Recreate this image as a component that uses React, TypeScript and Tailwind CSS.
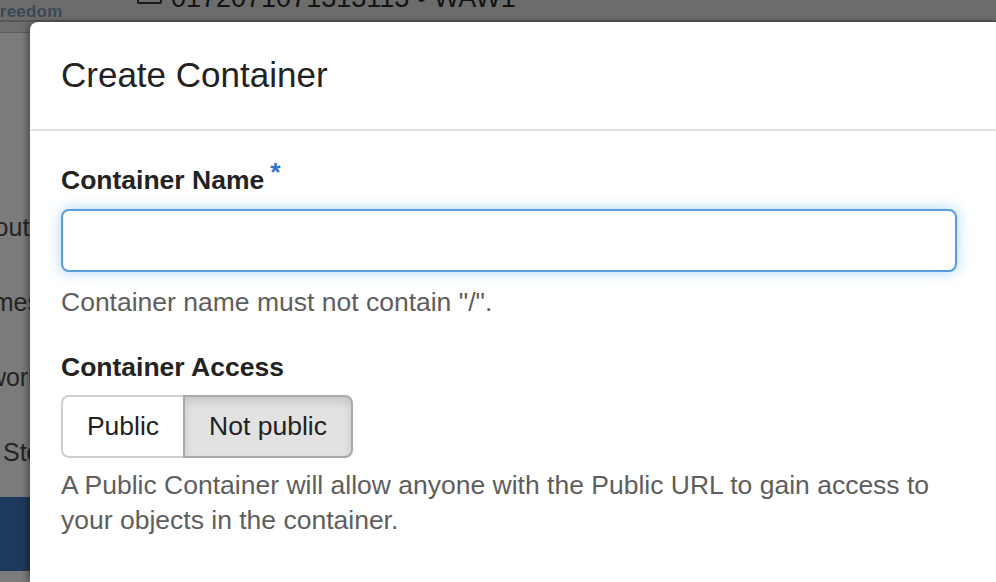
import React from "react";

export default function App() {
  const font = { fontFamily: '"Liberation Sans", Arial, Helvetica, sans-serif' };
  return (
    <div
      className="w-[996px] h-[582px] overflow-hidden flex flex-col bg-[#7b7b7b]"
      style={font}
    >
      {/* Top navbar (under overlay) */}
      <div className="h-[22px] shrink-0 bg-[#6c6c6c] border-b-2 border-[#575757] flex items-start overflow-hidden">
        <div className="w-[137px] shrink-0 overflow-hidden">
          <div className="ml-[-6px] mt-[2px] text-[17px] leading-[20px] text-[#3a4858] font-bold tracking-[0.2px]">
            freedom
          </div>
        </div>
        <div className="w-[25px] h-[6px] mt-[-2px] border-2 border-[#1a1a1a] rounded-[2px] shrink-0" />
        <div className="ml-[9px] mt-[-15px] text-[27px] leading-[26px] text-[#141414] whitespace-nowrap">
          0172071071313113 • WAW1
        </div>
      </div>

      <div className="flex flex-1 min-h-0">
        {/* Sidebar (under overlay) */}
        <div className="w-[30px] shrink-0 overflow-hidden flex flex-col">
          <div className="h-[11px] shrink-0 bg-[#6e6e6e] border-b border-[#5e5e5e]" />
          <div className="mt-[157px] flex flex-col text-[25px] text-[#242424] whitespace-nowrap">
            <div className="h-[75px] leading-[75px] ml-[-36px]">About</div>
            <div className="h-[75px] leading-[75px] ml-[-56px]">Volumes</div>
            <div className="h-[75px] leading-[75px] ml-[-51px]">Network</div>
            <div className="h-[75px] leading-[75px] ml-[3px]">Storage</div>
          </div>
          <div className="mt-[7px] h-[74px] shrink-0 bg-[#1d3a5e]" />
          <div className="flex-1 bg-[#7b7b7b]" />
        </div>

        {/* Modal */}
        <div className="flex-1 bg-white rounded-tl-[8px] shadow-[-3px_0_6px_rgba(0,0,0,0.35)] flex flex-col">
          <div className="pt-[34px] pb-[35px] pl-[31px] border-b-2 border-[#e3e3e3]">
            <h4 className="text-[35px] leading-[38px] text-[#222] font-medium">
              Create Container
            </h4>
          </div>

          <div className="pl-[31px] pt-[30px] w-[927px]">
            <label className="block text-[26.5px] leading-[38px] font-bold text-[#232323]">
              Container Name
              <span className="relative -top-[8px] ml-[6px] text-[#2f76c9]">*</span>
            </label>
            <div className="mt-[10px] w-[896px] h-[63px] border-2 border-[#5a9ee2] rounded-[8px] shadow-[0_0_14px_rgba(102,175,233,0.55)] bg-white" />
            <p className="mt-[11px] text-[26.5px] leading-[38px] text-[#5e5e5e]">
              Container name must not contain "/".
            </p>

            <label className="block mt-[27px] text-[26.5px] leading-[38px] font-bold text-[#232323]">
              Container Access
            </label>
            <div className="mt-[9px] flex h-[63px]">
              <div className="w-[122px] h-full flex items-center justify-center border-2 border-r-0 border-[#cfcfcf] rounded-l-[8px] bg-white text-[26.5px] text-[#222]">
                Public
              </div>
              <div className="w-[170px] h-full flex items-center justify-center border-2 border-[#a9a9a9] rounded-r-[8px] bg-[#e2e2e2] shadow-[inset_0_5px_9px_rgba(0,0,0,0.12)] text-[26.5px] text-[#222]">
                Not public
              </div>
            </div>
            <p className="mt-[10px] w-[896px] text-[26.5px] leading-[35px] text-[#5e5e5e]">
              A Public Container will allow anyone with the Public URL to gain access to your objects in the container.
            </p>
          </div>
        </div>
      </div>
    </div>
  );
}
